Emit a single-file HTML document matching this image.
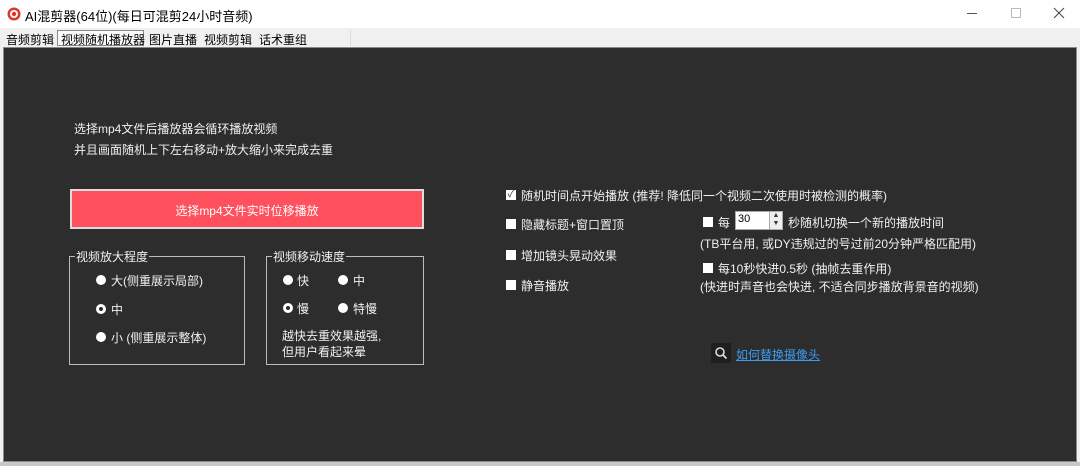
<!DOCTYPE html>
<html><head><meta charset="utf-8"><style>
*{margin:0;padding:0;box-sizing:border-box}
body{width:1080px;height:466px;background:#f0f0f0;position:relative;overflow:hidden;font-family:"Liberation Sans","Microsoft YaHei","Noto Sans CJK SC",sans-serif;font-size:12px}
.a{position:absolute;white-space:nowrap}
.w{color:#f0f0f0}
.title{left:0;top:0;width:1080px;height:28px;background:#fff}
.panel{left:3px;top:47px;width:1074px;height:415px;background:#2d2d2d;border:1px solid #888}
.cb{width:10px;height:10px;background:#fff;display:inline-block}
.rd{width:10px;height:10px;border-radius:50%;background:#fff;display:inline-block}
.rs{width:10px;height:10px;border-radius:50%;border:3px solid #fff;display:inline-block}
.grp{border:1px solid #bbb}
.gl{background:#2d2d2d;color:#f0f0f0;padding:0 1px}
</style></head><body>
<div class="a title"></div>
<svg class="a" style="left:7px;top:7px" width="14" height="14" viewBox="0 0 14 14"><circle cx="7" cy="7" r="6.5" fill="#e2342a"/><circle cx="7" cy="7" r="4" fill="#fff"/><circle cx="7" cy="7" r="2.2" fill="#e2342a"/></svg>
<div class="a" style="left:25px;top:6px;font-size:13px;color:#000">AI混剪器(64位)(每日可混剪24小时音频)</div>
<div class="a" style="left:967px;top:13px;width:10px;height:1px;background:#555"></div>
<div class="a" style="left:1011px;top:8px;width:10px;height:10px;border:1px solid #bbb"></div>
<svg class="a" style="left:1053px;top:7px" width="12" height="12"><path d="M1 1L11 11M11 1L1 11" stroke="#444" stroke-width="1"/></svg>
<div class="a" style="left:0;top:28px;width:1080px;height:19px;background:#f0f0f0"></div>
<div class="a" style="left:6px;top:31px;color:#000">音频剪辑</div>
<div class="a" style="left:57px;top:30px;width:87px;height:16px;border:1px solid #888;background:#fafafa"></div>
<div class="a" style="left:61px;top:31px;color:#000">视频随机播放器</div>
<div class="a" style="left:149px;top:31px;color:#000">图片直播</div>
<div class="a" style="left:204px;top:31px;color:#000">视频剪辑</div>
<div class="a" style="left:259px;top:31px;color:#000">话术重组</div>
<div class="a" style="left:200px;top:30px;width:151px;height:16px;border-right:1px solid #ddd"></div>
<div class="a panel"></div>
<div class="a" style="left:0;top:462px;width:1080px;height:4px;background:#c8c8c8"></div>
<div class="a w" style="left:74px;top:120px">选择mp4文件后播放器会循环播放视频</div>
<div class="a w" style="left:74px;top:141px">并且画面随机上下左右移动+放大缩小来完成去重</div>
<div class="a" style="left:70px;top:189px;width:354px;height:40px;background:#ff505e;border:2px solid #ddd"></div>
<div class="a" style="left:70px;top:202px;width:354px;text-align:center;color:#fff">选择mp4文件实时位移播放</div>
<div class="a grp" style="left:69px;top:256px;width:176px;height:109px"></div>
<div class="a gl" style="left:75px;top:248px">视频放大程度</div>
<div class="a rd" style="left:96px;top:275px"></div><div class="a w" style="left:111px;top:272px">大(侧重展示局部)</div>
<div class="a rs" style="left:96px;top:304px"></div><div class="a w" style="left:111px;top:301px">中</div>
<div class="a rd" style="left:96px;top:332px"></div><div class="a w" style="left:111px;top:329px">小 (侧重展示整体)</div>
<div class="a grp" style="left:266px;top:256px;width:158px;height:109px"></div>
<div class="a gl" style="left:272px;top:248px">视频移动速度</div>
<div class="a rd" style="left:283px;top:275px"></div><div class="a w" style="left:297px;top:272px">快</div>
<div class="a rd" style="left:338px;top:275px"></div><div class="a w" style="left:353px;top:272px">中</div>
<div class="a rs" style="left:283px;top:303px"></div><div class="a w" style="left:297px;top:300px">慢</div>
<div class="a rd" style="left:338px;top:303px"></div><div class="a w" style="left:353px;top:300px">特慢</div>
<div class="a w" style="left:282px;top:327px">越快去重效果越强,</div>
<div class="a w" style="left:282px;top:343px">但用户看起来晕</div>
<div class="a cb" style="left:506px;top:190px;color:#333;font-size:10px;line-height:10px;text-align:center">✓</div>
<div class="a w" style="left:521px;top:187px">随机时间点开始播放 (推荐! 降低同一个视频二次使用时被检测的概率)</div>
<div class="a cb" style="left:506px;top:219px"></div><div class="a w" style="left:521px;top:216px">隐藏标题+窗口置顶</div>
<div class="a cb" style="left:506px;top:250px"></div><div class="a w" style="left:521px;top:247px">增加镜头晃动效果</div>
<div class="a cb" style="left:506px;top:280px"></div><div class="a w" style="left:521px;top:277px">静音播放</div>
<div class="a cb" style="left:703px;top:217px"></div><div class="a w" style="left:718px;top:214px">每</div>
<div class="a" style="left:735px;top:211px;width:48px;height:19px;background:#fff;border:1px solid #aaa;font-size:11px;padding:1px 2px;color:#000">30</div>
<div class="a" style="left:769px;top:212px;width:13px;height:17px;background:#eee;border-left:1px solid #aaa;font-size:7px;line-height:8px;text-align:center;color:#333">▲<br>▼</div>
<div class="a w" style="left:788px;top:214px">秒随机切换一个新的播放时间</div>
<div class="a w" style="left:700px;top:235px">(TB平台用, 或DY违规过的号过前20分钟严格匹配用)</div>
<div class="a cb" style="left:703px;top:263px"></div><div class="a w" style="left:718px;top:260px">每10秒快进0.5秒 (抽帧去重作用)</div>
<div class="a w" style="left:700px;top:278px">(快进时声音也会快进, 不适合同步播放背景音的视频)</div>
<div class="a" style="left:711px;top:343px;width:20px;height:20px;background:#1f1f1f"></div>
<svg class="a" style="left:714px;top:346px" width="14" height="14"><circle cx="6" cy="6" r="4" stroke="#ddd" stroke-width="1.6" fill="none"/><path d="M9 9L12.5 12.5" stroke="#ddd" stroke-width="1.8"/></svg>
<div class="a" style="left:736px;top:346px;color:#3c9cf0;text-decoration:underline">如何替换摄像头</div>
</body></html>
